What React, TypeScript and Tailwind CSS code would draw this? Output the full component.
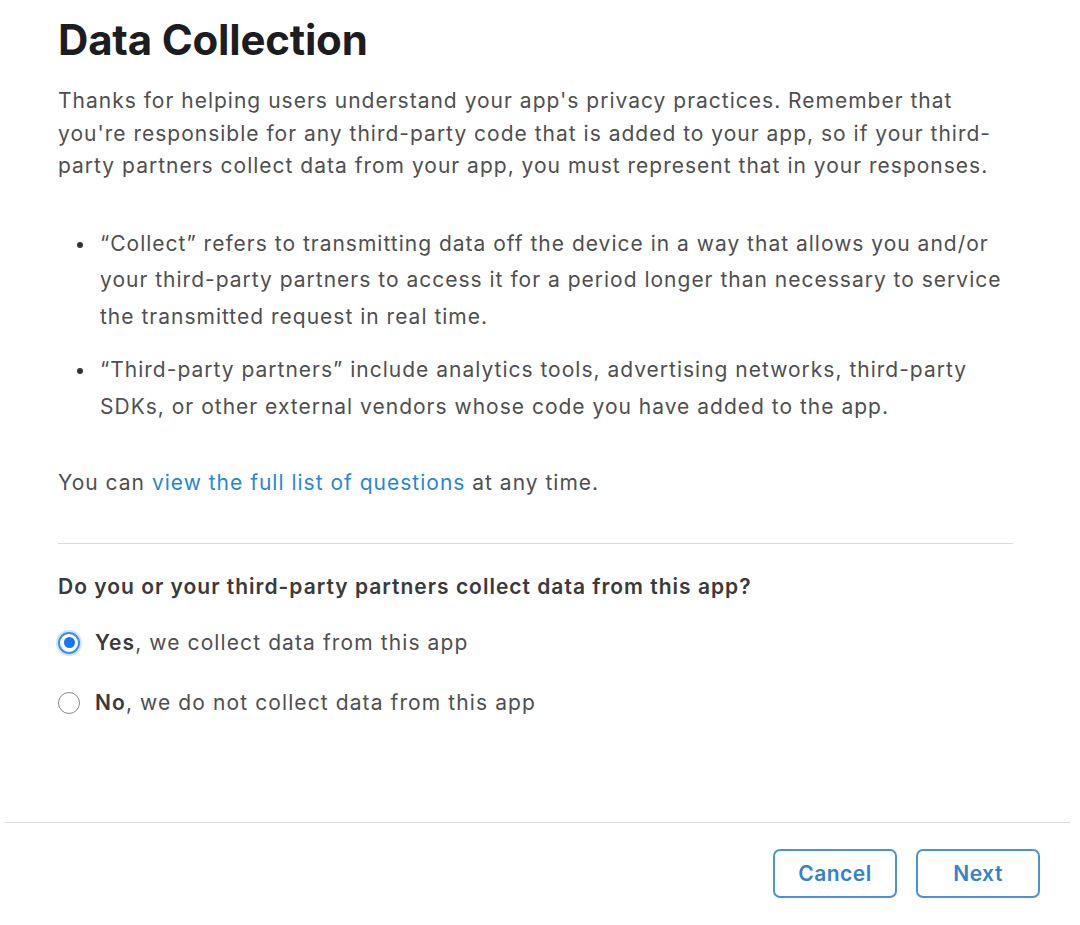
export default function App() {
	const font = { fontFamily: 'Inter, "Noto Sans", sans-serif' };

	return (
		<div
			className="w-[1080px] h-[925px] bg-white flex flex-col overflow-hidden"
			style={font}
		>
			{/* Body */}
			<div className="flex-1 pl-[58px] pr-[67px] pt-[15px]">
				<h1 className="text-[42px] leading-[50px] font-bold text-[#1d1d1f] tracking-[-0.2px]">
					Data Collection
				</h1>

				<p className="mt-[20px] text-[21px] leading-[32.5px] tracking-[1px] text-[#4f4f4f] pr-[10px]">
					Thanks for helping users understand your app's privacy practices.
					Remember that you're responsible for any third-party code that is
					added to your app, so if your third-party partners collect data from
					your app, you must represent that in your responses.
				</p>

				<ul className="mt-[43px] flex flex-col gap-[17px] text-[21px] leading-[36.5px] tracking-[1px] text-[#4f4f4f]">
					<li className="flex">
						<span className="w-[42px] shrink-0 flex justify-center pl-[1px]">
							<span className="mt-[16px] w-[6px] h-[6px] rounded-full bg-[#333]" />
						</span>
						<span>
							“Collect” refers to transmitting data off the device in a way that
							allows you and/or your third-party partners to access it for a
							period longer than necessary to service the transmitted request in
							real time.
						</span>
					</li>
					<li className="flex">
						<span className="w-[42px] shrink-0 flex justify-center pl-[1px]">
							<span className="mt-[16px] w-[6px] h-[6px] rounded-full bg-[#333]" />
						</span>
						<span>
							“Third-party partners” include analytics tools, advertising
							networks, third-party SDKs, or other external vendors whose code
							you have added to the app.
						</span>
					</li>
				</ul>

				<p className="mt-[42px] text-[21px] leading-[32.5px] tracking-[1px] text-[#4f4f4f]">
					You can{' '}
					<a href="#" className="text-[#2a86d1]">
						view the full list of questions
					</a>{' '}
					at any time.
				</p>

				<div className="mt-[43px] h-px bg-[#dcdcdc]" />

				<p className="mt-[27px] text-[21px] leading-[32px] tracking-[1px] font-semibold text-[#3a3a3a]">
					Do you or your third-party partners collect data from this app?
				</p>

				<div className="mt-[24px] flex flex-col gap-[28px]">
					<label className="flex items-center gap-[15px] text-[21px] leading-[32px] tracking-[1.1px] text-[#4f4f4f]">
						<span className="w-[22px] h-[22px] rounded-full border-[2px] border-[#3d8fe3] bg-white flex items-center justify-center shadow-[0_0_0_2px_#cfe4fa]">
							<span className="w-[11px] h-[11px] rounded-full bg-[#1a74ea]" />
						</span>
						<span>
							<strong className="font-semibold text-[#3a3a3a]">Yes</strong>, we
							collect data from this app
						</span>
					</label>
					<label className="flex items-center gap-[15px] text-[21px] leading-[32px] tracking-[1.1px] text-[#4f4f4f]">
						<span className="w-[22px] h-[22px] rounded-full border-[1.5px] border-[#8a8a8a] bg-white" />
						<span>
							<strong className="font-semibold text-[#3a3a3a]">No</strong>, we do
							not collect data from this app
						</span>
					</label>
				</div>
			</div>

			{/* Footer */}
			<div className="mx-[5px] mr-[10px] h-px bg-[#dcdcdc]" />
			<div className="h-[102px] flex justify-end items-start gap-[19px] pt-[26px] pr-[40px]">
				<button className="w-[124px] h-[49px] rounded-[7px] border-2 border-[#4a93d6] text-[#3582c8] text-[21px] tracking-[0.5px] font-semibold">
					Cancel
				</button>
				<button className="w-[124px] h-[49px] rounded-[7px] border-2 border-[#4a93d6] text-[#3582c8] text-[21px] tracking-[0.5px] font-semibold">
					Next
				</button>
			</div>
		</div>
	);
}
